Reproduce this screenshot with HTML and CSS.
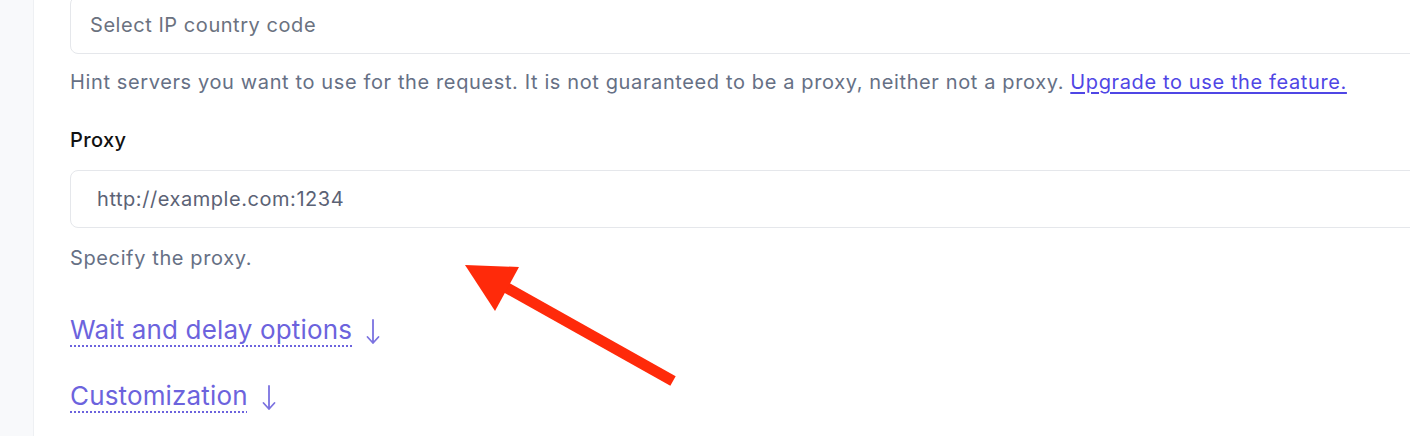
FILE: index.html
```html
<!DOCTYPE html>
<html lang="en">
<head>
<meta charset="utf-8">
<title>Proxy settings</title>
<link rel="stylesheet" href="styles.css">
</head>
<body>
<div class="page">
  <aside class="sidebar"></aside>
  <main class="content">
    <div class="field field-first">
      <div class="input placeholder">Select IP country code</div>
      <p class="hint">Hint servers you want to use for the request. It is not guaranteed to be a proxy, neither not a proxy. <a class="upgrade" href="#">Upgrade to use the feature.</a></p>
    </div>
    <div class="field">
      <label class="label">Proxy</label>
      <div class="input value">http://example.com:1234</div>
      <p class="hint hint-proxy">Specify the proxy.</p>
    </div>
    <div class="toggle"><span class="toggle-text">Wait and delay options</span><svg class="toggle-arrow" width="14" height="26" viewBox="0 0 14 26" aria-hidden="true"><path d="M7 1 V24 M1.5 18 L7 24 L12.5 18" fill="none" stroke="#7b72e0" stroke-width="1.8" stroke-linecap="round" stroke-linejoin="round"/></svg></div>
    <div class="toggle"><span class="toggle-text">Customization</span><svg class="toggle-arrow" width="14" height="26" viewBox="0 0 14 26" aria-hidden="true"><path d="M7 1 V24 M1.5 18 L7 24 L12.5 18" fill="none" stroke="#7b72e0" stroke-width="1.8" stroke-linecap="round" stroke-linejoin="round"/></svg></div>
    <svg class="annotation" width="240" height="140" viewBox="440 250 240 140" aria-hidden="true">
      <line x1="673" y1="381" x2="500" y2="284" stroke="#ff2a0a" stroke-width="11"/>
      <polygon points="465,265 519,267 495,311" fill="#ff2a0a"/>
    </svg>
  </main>
</div>
</body>
</html>
```

FILE: styles.css
```css
html, body {
  margin: 0;
  padding: 0;
  background: #ffffff;
  overflow: hidden;
}
body {
  font-family: Inter, "Noto Sans", sans-serif;
  width: 1410px;
  height: 436px;
}
.page {
  display: flex;
  height: 436px;
}
.sidebar {
  width: 33px;
  flex: none;
  background: #f8f9fb;
  border-right: 1px solid #eef0f3;
}
.content {
  position: relative;
  flex: 1;
  padding-left: 36px;
  min-width: 0;
}
.field-first {
  margin-top: -4px;
}
.input {
  width: 1400px;
  height: 56px;
  border: 1px solid #e5e7eb;
  border-radius: 8px;
  box-sizing: content-box;
  display: flex;
  align-items: center;
  font-size: 20px;
  letter-spacing: 0.55px;
}
.placeholder {
  padding-left: 19px;
  color: #6b7280;
}
.value {
  padding-left: 26px;
  color: #5b6275;
}
.hint {
  margin: 16px 0 0;
  font-size: 20px;
  letter-spacing: 0.62px;
  color: #667085;
  line-height: 24px;
}
.hint-proxy {
  margin-top: 18px;
}
.upgrade {
  color: #4f46e5;
  text-decoration: underline;
  text-underline-offset: 3px;
}
.field + .field {
  margin-top: 34px;
}
.label {
  display: block;
  font-size: 20px;
  letter-spacing: 0.4px;
  font-weight: 500;
  color: #111111;
  line-height: 24px;
  margin-bottom: 18px;
}
.toggle {
  display: flex;
  align-items: center;
  font-size: 26px;
  letter-spacing: 0.15px;
  color: #6c63dd;
  line-height: 32px;
  margin-top: 44px;
}
.toggle + .toggle {
  margin-top: 34px;
}
.toggle-text {
  text-decoration: underline dotted;
  text-decoration-thickness: 2px;
  text-underline-offset: 6px;
}
.toggle-arrow {
  margin-left: 14px;
  margin-top: 4px;
}
.annotation {
  position: absolute;
  left: 406px;
  top: 250px;
}
```
